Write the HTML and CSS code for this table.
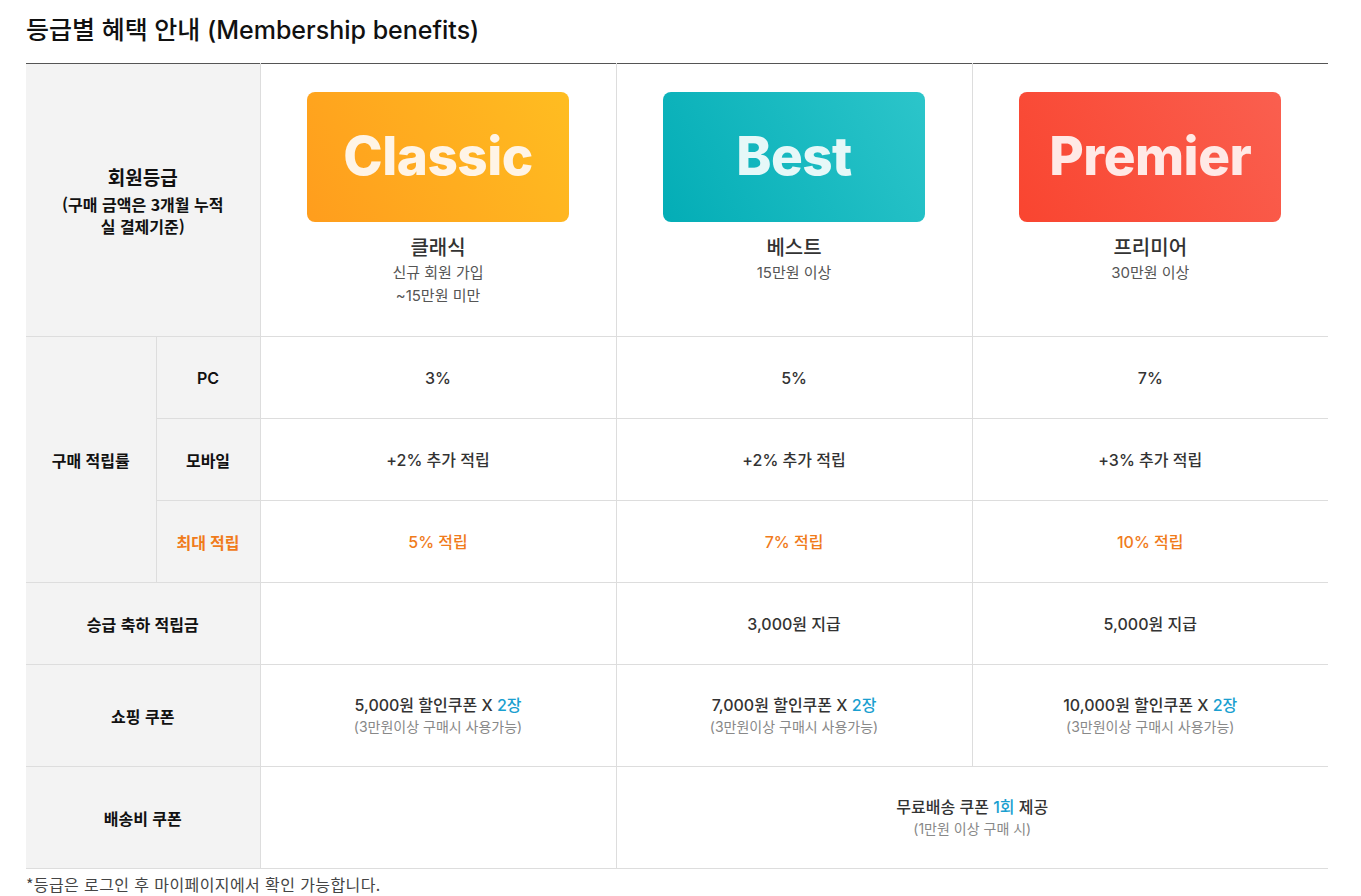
FILE: index.html
```html
<!DOCTYPE html>
<html lang="ko">
<head>
<meta charset="utf-8">
<title>등급별 혜택 안내</title>
<link rel="stylesheet" href="styles.css">
</head>
<body>
<div class="wrap">
  <h2 class="title">등급별 혜택 안내 (Membership benefits)</h2>
  <table class="benefit">
    <colgroup>
      <col class="c-a"><col class="c-b"><col class="c-d"><col class="c-d"><col class="c-d">
    </colgroup>
    <tr class="r-head">
      <th colspan="2" class="lab">
        <div class="lab-main">회원등급</div>
        <div class="lab-sub">(구매 금액은 3개월 누적<br>실 결제기준)</div>
      </th>
      <td class="grade">
        <div class="badge classic">Classic</div>
        <div class="g-name">클래식</div>
        <div class="g-sub">신규 회원 가입<br>~15만원 미만</div>
      </td>
      <td class="grade">
        <div class="badge best">Best</div>
        <div class="g-name">베스트</div>
        <div class="g-sub">15만원 이상</div>
      </td>
      <td class="grade">
        <div class="badge premier">Premier</div>
        <div class="g-name">프리미어</div>
        <div class="g-sub">30만원 이상</div>
      </td>
    </tr>
    <tr class="r-std">
      <th rowspan="3" class="lab">구매 적립률</th>
      <th class="lab sub">PC</th>
      <td class="val">3%</td>
      <td class="val">5%</td>
      <td class="val">7%</td>
    </tr>
    <tr class="r-std">
      <th class="lab sub">모바일</th>
      <td class="val">+2% 추가 적립</td>
      <td class="val">+2% 추가 적립</td>
      <td class="val">+3% 추가 적립</td>
    </tr>
    <tr class="r-std">
      <th class="lab sub orange">최대 적립</th>
      <td class="val orange">5% 적립</td>
      <td class="val orange">7% 적립</td>
      <td class="val orange">10% 적립</td>
    </tr>
    <tr class="r-std">
      <th colspan="2" class="lab">승급 축하 적립금</th>
      <td class="val"></td>
      <td class="val">3,000원 지급</td>
      <td class="val">5,000원 지급</td>
    </tr>
    <tr class="r-tall">
      <th colspan="2" class="lab">쇼핑 쿠폰</th>
      <td class="val">5,000원 할인쿠폰 X <span class="blue">2장</span><div class="note">(3만원이상 구매시 사용가능)</div></td>
      <td class="val">7,000원 할인쿠폰 X <span class="blue">2장</span><div class="note">(3만원이상 구매시 사용가능)</div></td>
      <td class="val">10,000원 할인쿠폰 X <span class="blue">2장</span><div class="note">(3만원이상 구매시 사용가능)</div></td>
    </tr>
    <tr class="r-tall">
      <th colspan="2" class="lab">배송비 쿠폰</th>
      <td class="val"></td>
      <td class="val" colspan="2">무료배송 쿠폰 <span class="blue">1회</span> 제공<div class="note">(1만원 이상 구매 시)</div></td>
    </tr>
  </table>
  <p class="foot">*등급은 로그인 후 마이페이지에서 확인 가능합니다.</p>
</div>
</body>
</html>
```
FILE: styles.css
```css
html, body {
  margin: 0;
  padding: 0;
  background: #fff;
}
body {
  font-family: "Inter", "Noto Sans CJK KR", "Noto Sans", sans-serif;
  color: #333;
}
.wrap {
  padding: 0 33px 0 26px;
}
.title {
  margin: 0;
  padding-top: 14px;
  height: 63px;
  box-sizing: border-box;
  font-size: 25px;
  line-height: 32px;
  font-weight: 500;
  color: #111;
}
.benefit {
  width: 1302px;
  border-collapse: collapse;
  table-layout: fixed;
}
.c-a { width: 130px; }
.c-b { width: 104px; }
.c-d { width: 356px; }
.benefit th,
.benefit td {
  border: 1px solid #ddd;
  padding: 0;
  text-align: center;
  vertical-align: middle;
}
.benefit tr > :first-child { border-left: none; }
.benefit tr > :last-child { border-right: none; }
.benefit tr.r-std > th.sub:first-child { border-left: 1px solid #ddd; }
.benefit tr:first-child > * { border-top: 1px solid #555; }
.lab {
  background: #f3f3f3;
  font-family: "Noto Sans CJK KR", sans-serif;
  font-size: 16px;
  font-weight: 700;
  color: #111;
}
.lab.sub {
  font-family: "Inter", "Noto Sans CJK KR", sans-serif;
  font-weight: 600;
}
.lab-main {
  font-size: 19px;
  line-height: 26px;
}
.lab-sub {
  font-size: 16px;
  line-height: 22px;
  margin-top: 3px;
}
.r-head { height: 273px; }
.r-std { height: 82px; }
.r-tall { height: 102px; }
.grade {
  vertical-align: top !important;
  padding-top: 28px !important;
}
.badge {
  width: 262px;
  height: 130px;
  margin: 0 auto;
  border-radius: 8px;
  display: flex;
  align-items: center;
  justify-content: center;
  font-family: "Inter", sans-serif;
  font-weight: 800;
  font-size: 53px;
  letter-spacing: -0.5px;
  padding-bottom: 2px;
  box-sizing: border-box;
}
.classic {
  background: linear-gradient(60deg, #ff9d1d 0%, #ffbd21 100%);
  color: #fff4e6;
}
.best {
  background: linear-gradient(60deg, #03adb6 0%, #2cc5ca 100%);
  color: #e6f8f8;
}
.premier {
  background: linear-gradient(60deg, #f94530 0%, #fa5f4f 100%);
  color: #ffe9e6;
}
.g-name {
  margin-top: 13px;
  font-size: 20px;
  line-height: 26px;
  font-weight: 500;
  color: #333;
}
.g-sub {
  font-size: 15px;
  line-height: 23px;
  font-weight: 400;
  color: #555;
}
.val {
  font-size: 16px;
  line-height: 22px;
  font-weight: 500;
  color: #333;
}
.orange { color: #f07b1b !important; }
.blue { color: #1a9fd0; }
.note {
  font-size: 14px;
  line-height: 22px;
  font-weight: 400;
  color: #888;
}
.foot {
  margin: 4px 0 0;
  font-family: "Noto Sans CJK KR", sans-serif;
  font-size: 16px;
  line-height: 22px;
  letter-spacing: 0.4px;
  font-weight: 400;
  color: #444;
}
```
